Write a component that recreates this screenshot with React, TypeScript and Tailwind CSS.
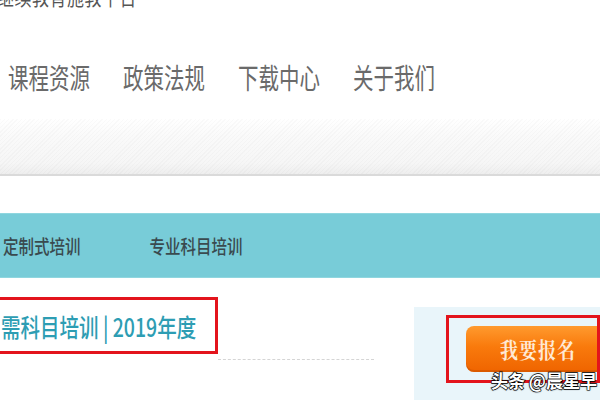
import React from "react";

const cjk = "font-['Microsoft_YaHei','Noto_Sans_CJK_SC',sans-serif]";

const navItems = ["课程资源", "政策法规", "下载中心", "关于我们"];

const App = () => {
  return (
    <div className={`relative w-[600px] h-[400px] overflow-hidden bg-white ${cjk}`}>
      {/* site title, only its lower part shows */}
      <div className="h-[8px] overflow-hidden flex items-end ml-[-3px]">
        <span className="inline-block shrink-0 text-[17px] leading-[18px] text-[#555] tracking-[0.5px] origin-bottom scale-y-[1.3]">
          继续教育施教平台
        </span>
      </div>

      {/* main nav */}
      <div className="mt-[51px] h-[34px] flex items-center gap-[33px] pl-[8px] text-[#6a6a6a]">
        {navItems.map((item) => (
          <span key={item} className="inline-block text-[20.5px] leading-[34px] scale-y-[1.4]">
            {item}
          </span>
        ))}
      </div>

      {/* textured band */}
      <div className="mt-[26px] h-[57px] border-b-2 border-[#dadada] bg-[repeating-linear-gradient(135deg,rgba(0,0,0,0.018)_0px,rgba(0,0,0,0.018)_1px,transparent_1px,transparent_3px),linear-gradient(to_bottom,#ffffff,#fafafa_30%,#f6f6f6_80%,#eeeeee)]" />

      {/* teal sub nav */}
      <div className="mt-[37px] h-[65px] bg-[#78ccd8] border-t border-[#8fd6df] border-b border-[#6cc0cc] flex items-center text-[#3a4a4f] font-medium">
        <span className="inline-block ml-[3px] text-[15.5px] scale-y-[1.25] origin-left">定制式培训</span>
        <span className="inline-block ml-[69px] text-[15.5px] scale-y-[1.25] origin-left">专业科目培训</span>
      </div>

      {/* content row */}
      <div className="flex">
        <div className="w-[414px] pt-[19px]">
          <div className="flex items-end">
            <div className="w-[221px] h-[57px] border-[3px] border-[#e3141c] ml-[-3px] flex items-center">
              <span className="inline-block ml-[1px] text-[19.5px] font-medium text-[#2d9db3] scale-y-[1.3] whitespace-nowrap">
                需科目培训 | 2019年度
              </span>
            </div>
            <div className="w-[156px] h-[4px] mb-[-6px] border-b border-dashed border-[#d5d5d5]" />
          </div>
        </div>

        <div className="flex-1 mt-[29px] h-[100px] bg-[#e9f5fa] pl-[32px] pt-[8px]">
          <div className="h-[68px] border-[3px] border-[#e3141c] pl-[17px] pt-[8px]">
            <div className="h-[46px] rounded-l-[8px] bg-[linear-gradient(to_bottom,#ff9a2e,#f97a0c_45%,#ef6400)] shadow-[inset_0_-2px_0_rgba(200,80,0,0.5)] flex items-center pl-[34px]">
              <span className="inline-block text-[18px] font-bold text-[#ffe9d4] tracking-[1px] scale-y-[1.2] font-['Noto_Serif_CJK_SC','Noto_Sans_CJK_SC',serif]">
                我要报名
              </span>
            </div>
          </div>
        </div>
      </div>

      {/* watermark overlay */}
      <div className="absolute left-[491px] top-[367px] text-[17px] font-bold text-white [-webkit-text-stroke:1.2px_#000] [paint-order:stroke_fill] [text-shadow:0_0_2px_#000] scale-y-[1.1]">
        头条 @晨星早
      </div>
    </div>
  );
};

export default App;
